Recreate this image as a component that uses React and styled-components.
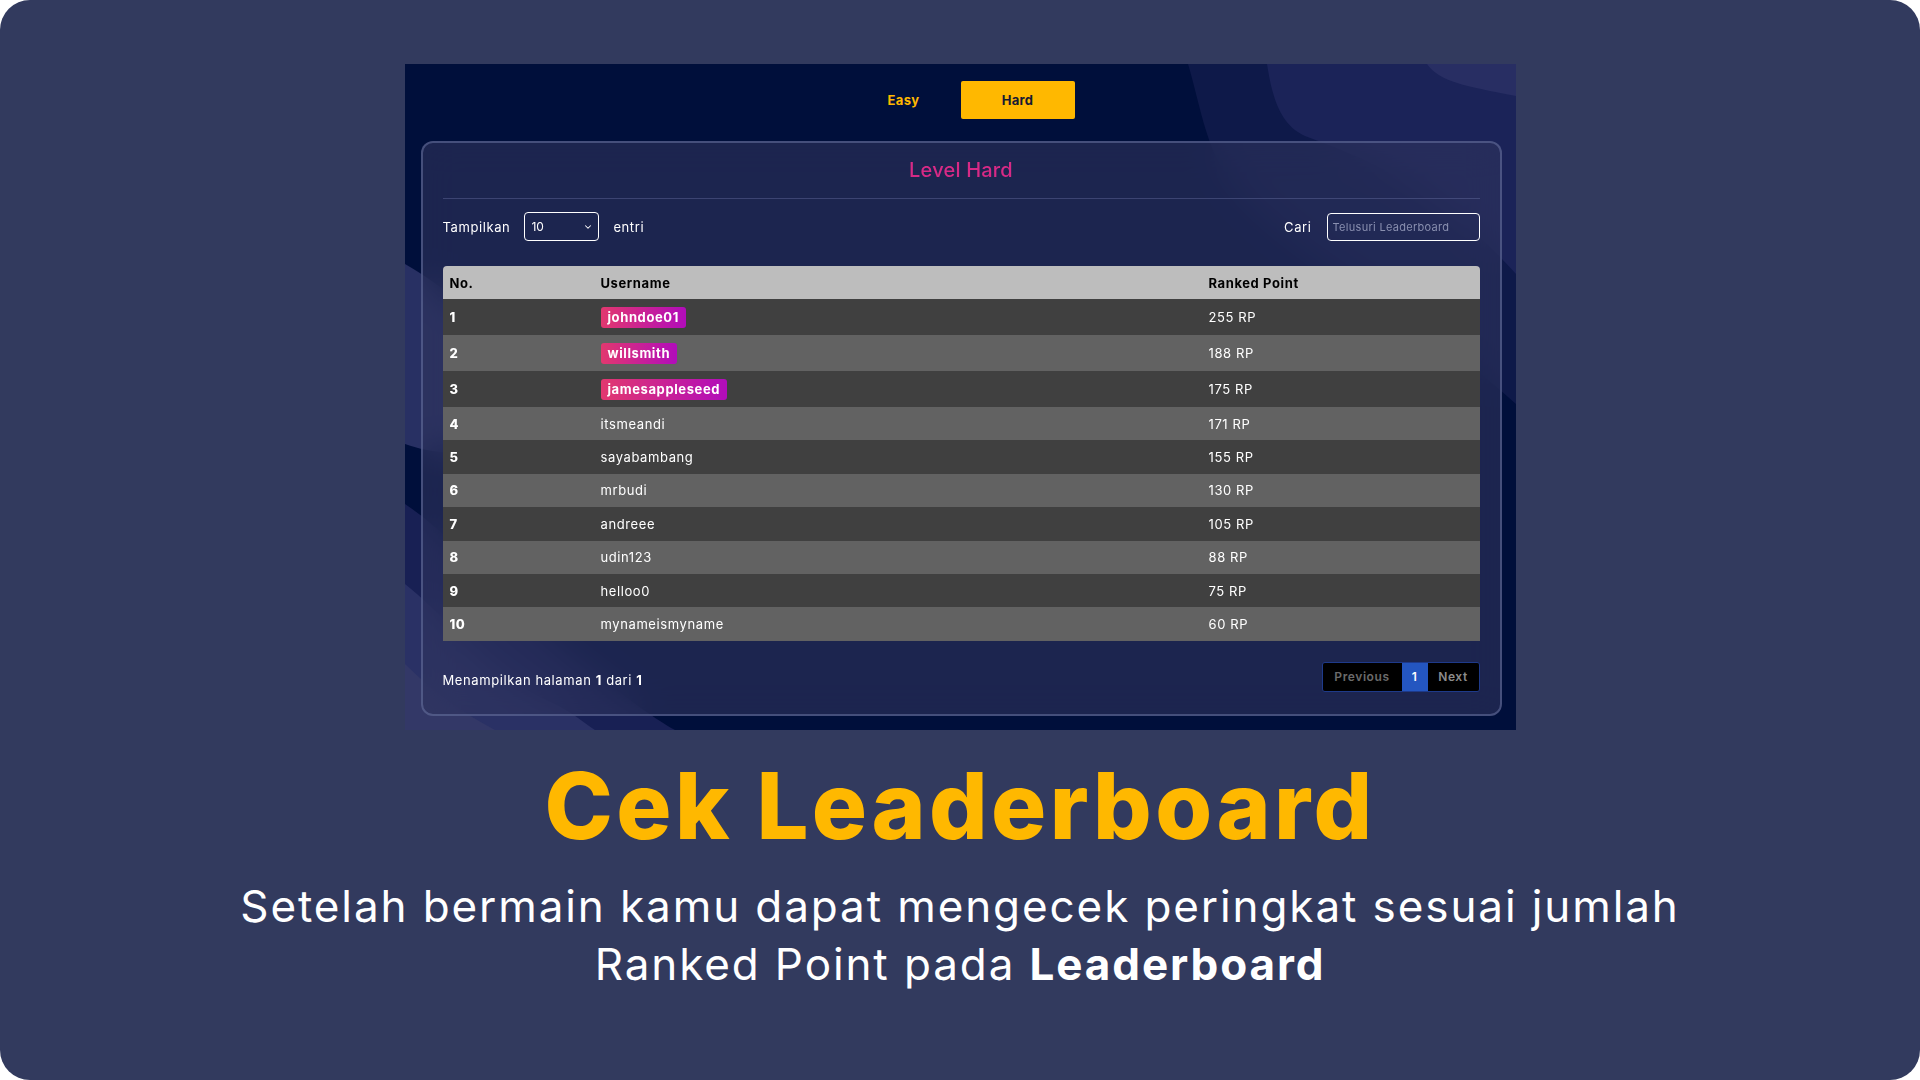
import React from 'react';
import styled, { createGlobalStyle } from 'styled-components';
import { ChevronDown } from 'lucide-react';

const GlobalStyle = createGlobalStyle`
  html, body {
    margin: 0;
    padding: 0;
    background: #ffffff;
  }
  * {
    box-sizing: border-box;
  }
  body {
    font-family: Inter, 'Noto Sans', sans-serif;
  }
`;

const Frame = styled.div`
  width: 1920px;
  height: 1080px;
  background: #323a5e;
  border-radius: 30px;
  display: flex;
  flex-direction: column;
  align-items: center;
  overflow: hidden;
`;

const Shot = styled.div`
  margin-top: 64px;
  width: 1111px;
  height: 666px;
  position: relative;
  overflow: hidden;
  background: #000f3b;
`;

const Waves = styled.svg`
  position: absolute;
  inset: 0;
  width: 100%;
  height: 100%;
`;

const ShotContent = styled.div`
  position: relative;
  display: flex;
  flex-direction: column;
  padding-top: 17px;
`;

const Tabs = styled.div`
  display: flex;
  justify-content: center;
  padding-left: 1px;
`;

const Tab = styled.button`
  width: 114px;
  height: 38px;
  border: none;
  border-radius: 2px;
  font-family: inherit;
  font-size: 13px;
  font-weight: 700;
  letter-spacing: 0.3px;
  cursor: pointer;
  background: ${(p) => (p.$active ? '#ffb800' : 'transparent')};
  color: ${(p) => (p.$active ? '#161a33' : '#ffb800')};
`;

const Card = styled.div`
  margin: 22px 0 0 16px;
  width: 1081px;
  height: 575px;
  border: 2px solid rgba(120, 130, 180, 0.45);
  border-radius: 12px;
  background: rgba(47, 52, 94, 0.6);
  backdrop-filter: blur(18px);
  padding: 0 20px;
  display: flex;
  flex-direction: column;
`;

const CardTitle = styled.h2`
  margin: 11px 0 0;
  height: 32px;
  line-height: 32px;
  text-align: center;
  font-size: 20px;
  font-weight: 500;
  letter-spacing: 0.2px;
  color: #d72a86;
`;

const Divider = styled.div`
  margin-top: 12px;
  height: 1px;
  background: rgba(120, 130, 180, 0.35);
`;

const Controls = styled.div`
  margin-top: 13px;
  height: 29px;
  display: flex;
  align-items: center;
  justify-content: space-between;
`;

const ControlGroup = styled.div`
  display: flex;
  align-items: center;
  gap: ${(p) => p.$gap || 14}px;
  color: #ffffff;
  font-size: 13px;
  letter-spacing: 0.6px;
`;

const SelectBox = styled.div`
  width: 75px;
  height: 29px;
  border: 1.5px solid #ffffff;
  border-radius: 4px;
  display: flex;
  align-items: center;
  justify-content: space-between;
  padding: 0 5px 0 6px;
  color: #ffffff;
  font-size: 12px;
  letter-spacing: 0;
`;

const SearchInput = styled.input`
  width: 153px;
  height: 28px;
  border: 1.5px solid #ffffff;
  border-radius: 4px;
  background: transparent;
  padding: 0 5px;
  font-family: inherit;
  font-size: 11px;
  letter-spacing: 0.3px;
  color: #ffffff;
  outline: none;

  &::placeholder {
    color: #8a90b0;
  }
`;

const Table = styled.table`
  margin-top: 25px;
  width: 1037px;
  border-collapse: collapse;
  table-layout: fixed;
  font-size: 13px;
  letter-spacing: 0.6px;

  th {
    background: #bdbdbd;
    color: #000000;
    font-weight: 700;
    text-align: left;
    height: 33px;
    padding: 0 7px;
  }
  th:first-child {
    border-top-left-radius: 4px;
  }
  th:last-child {
    border-top-right-radius: 4px;
  }
`;

const Row = styled.tr`
  background: ${(p) => (p.$odd ? '#404040' : '#626262')};
  height: ${(p) => (p.$top ? 36 : 33.4)}px;
  color: #ffffff;

  td {
    padding: 0 7px;
  }
  td:first-child {
    font-weight: 800;
  }
`;

const Badge = styled.span`
  display: inline-block;
  height: 21px;
  line-height: 21px;
  padding: 0 7px;
  border-radius: 3px;
  background: linear-gradient(90deg, #e2386f 0%, #b10cbb 100%);
  color: #ffffff;
  font-weight: 700;
`;

const Footer = styled.div`
  margin-top: 21px;
  display: flex;
  justify-content: space-between;
  align-items: center;
  color: #ffffff;
  font-size: 13px;
  letter-spacing: 0.6px;

  span {
    padding-top: 6px;
  }
`;

const Pager = styled.div`
  display: flex;
  height: 30px;
  border: 1px solid #1e3a8a;
  border-radius: 3px;
  overflow: hidden;
`;

const PageButton = styled.button`
  width: ${(p) => p.$w}px;
  border: none;
  background: ${(p) => (p.$active ? '#2456c0' : '#000000')};
  color: ${(p) => (p.$active ? '#ffffff' : p.$dim ? '#6b6b6b' : '#8c8c8c')};
  font-family: inherit;
  font-size: 12px;
  font-weight: 600;
  letter-spacing: 0.6px;
  padding: 0;
`;

const Headline = styled.h1`
  margin: 21px 0 0;
  font-size: 92px;
  line-height: 110px;
  font-weight: 800;
  color: #ffb800;
  letter-spacing: 3.4px;
`;

const Subline = styled.p`
  margin: 16px 0 0;
  font-size: 44px;
  line-height: 58px;
  font-weight: 400;
  letter-spacing: 1.9px;
  color: #ffffff;
  text-align: center;

  b {
    font-weight: 700;
  }
`;

const players = [
  { name: 'johndoe01', rp: 255 },
  { name: 'willsmith', rp: 188 },
  { name: 'jamesappleseed', rp: 175 },
  { name: 'itsmeandi', rp: 171 },
  { name: 'sayabambang', rp: 155 },
  { name: 'mrbudi', rp: 130 },
  { name: 'andreee', rp: 105 },
  { name: 'udin123', rp: 88 },
  { name: 'helloo0', rp: 75 },
  { name: 'mynameismyname', rp: 60 },
];

const App = () => {
  return (
    <>
      <GlobalStyle />
      <Frame>
        <Shot>
          <Waves viewBox="0 0 1111 666" preserveAspectRatio="none">
            <path d="M783,0 C795,40 800,80 822,112 C880,190 1000,240 1111,340 L1111,0 Z" fill="#0e1949" />
            <path d="M862,0 C868,40 878,62 900,72 C960,95 1030,120 1111,210 L1111,0 Z" fill="#1b2358" />
            <path d="M1022,0 C1035,18 1060,22 1111,32 L1111,0 Z" fill="#282e63" />
            <path d="M0,200 C70,240 150,320 90,370 C60,395 30,390 0,380 Z" fill="#283063" />
            <path d="M0,440 C60,480 120,560 190,610 C230,640 250,655 270,666 L0,666 Z" fill="#182054" />
            <path d="M0,520 C50,560 80,610 150,640 C170,650 180,660 190,666 L0,666 Z" fill="#2a3165" />
            <path d="M0,600 C30,630 60,650 90,666 L0,666 Z" fill="#333867" />
          </Waves>
          <ShotContent>
            <Tabs>
              <Tab>Easy</Tab>
              <Tab $active>Hard</Tab>
            </Tabs>
            <Card>
              <CardTitle>Level Hard</CardTitle>
              <Divider />
              <Controls>
                <ControlGroup>
                  Tampilkan
                  <SelectBox>
                    10
                    <ChevronDown size={10} strokeWidth={2.5} />
                  </SelectBox>
                  entri
                </ControlGroup>
                <ControlGroup $gap={15}>
                  Cari
                  <SearchInput placeholder="Telusuri Leaderboard" />
                </ControlGroup>
              </Controls>
              <Table>
                <colgroup>
                  <col style={{ width: 151 }} />
                  <col style={{ width: 608 }} />
                  <col style={{ width: 278 }} />
                </colgroup>
                <thead>
                  <tr>
                    <th>No.</th>
                    <th>Username</th>
                    <th>Ranked Point</th>
                  </tr>
                </thead>
                <tbody>
                  {players.map((p, i) => (
                    <Row key={p.name} $odd={i % 2 === 0} $top={i < 3}>
                      <td>{i + 1}</td>
                      <td>{i < 3 ? <Badge>{p.name}</Badge> : p.name}</td>
                      <td>{p.rp} RP</td>
                    </Row>
                  ))}
                </tbody>
              </Table>
              <Footer>
                <span>
                  Menampilkan halaman <b>1</b> dari <b>1</b>
                </span>
                <Pager>
                  <PageButton $w={79} $dim>Previous</PageButton>
                  <PageButton $w={26} $active>1</PageButton>
                  <PageButton $w={51}>Next</PageButton>
                </Pager>
              </Footer>
            </Card>
          </ShotContent>
        </Shot>
        <Headline>Cek Leaderboard</Headline>
        <Subline>
          Setelah bermain kamu dapat mengecek peringkat sesuai jumlah
          <br />
          Ranked Point pada <b>Leaderboard</b>
        </Subline>
      </Frame>
    </>
  );
};

export default App;
